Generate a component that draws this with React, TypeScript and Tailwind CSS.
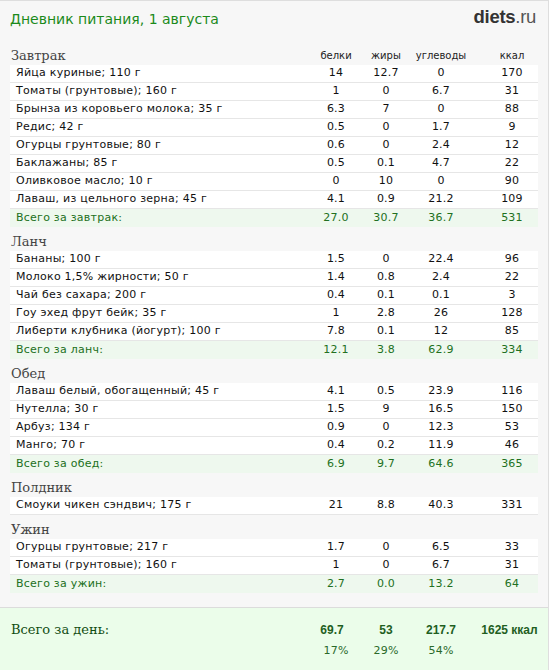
import React from 'react';

type Row = [string, string, string, string, string];

type Meal = {
    title: string;
    items: Row[];
    total?: [string, string, string, string];
};

const meals: Meal[] = [
    {
        title: 'Завтрак',
        items: [
            ['Яйца куриные; 110 г', '14', '12.7', '0', '170'],
            ['Томаты (грунтовые); 160 г', '1', '0', '6.7', '31'],
            ['Брынза из коровьего молока; 35 г', '6.3', '7', '0', '88'],
            ['Редис; 42 г', '0.5', '0', '1.7', '9'],
            ['Огурцы грунтовые; 80 г', '0.6', '0', '2.4', '12'],
            ['Баклажаны; 85 г', '0.5', '0.1', '4.7', '22'],
            ['Оливковое масло; 10 г', '0', '10', '0', '90'],
            ['Лаваш, из цельного зерна; 45 г', '4.1', '0.9', '21.2', '109'],
        ],
        total: ['27.0', '30.7', '36.7', '531'],
    },
    {
        title: 'Ланч',
        items: [
            ['Бананы; 100 г', '1.5', '0', '22.4', '96'],
            ['Молоко 1,5% жирности; 50 г', '1.4', '0.8', '2.4', '22'],
            ['Чай без сахара; 200 г', '0.4', '0.1', '0.1', '3'],
            ['Гоу эхед фрут бейк; 35 г', '1', '2.8', '26', '128'],
            ['Либерти клубника (йогурт); 100 г', '7.8', '0.1', '12', '85'],
        ],
        total: ['12.1', '3.8', '62.9', '334'],
    },
    {
        title: 'Обед',
        items: [
            ['Лаваш белый, обогащенный; 45 г', '4.1', '0.5', '23.9', '116'],
            ['Нутелла; 30 г', '1.5', '9', '16.5', '150'],
            ['Арбуз; 134 г', '0.9', '0', '12.3', '53'],
            ['Манго; 70 г', '0.4', '0.2', '11.9', '46'],
        ],
        total: ['6.9', '9.7', '64.6', '365'],
    },
    {
        title: 'Полдник',
        items: [['Смоуки чикен сэндвич; 175 г', '21', '8.8', '40.3', '331']],
    },
    {
        title: 'Ужин',
        items: [
            ['Огурцы грунтовые; 217 г', '1.7', '0', '6.5', '33'],
            ['Томаты (грунтовые); 160 г', '1', '0', '6.7', '31'],
        ],
        total: ['2.7', '0.0', '13.2', '64'],
    },
];

const grid = 'grid grid-cols-[1fr_50px_50px_60px_67px] items-center';
const itemFont = "font-['DejaVu_Sans',sans-serif] text-[11px] tracking-[0.25px]";
const headFont = "font-['DejaVu_Sans',sans-serif] text-[10px] leading-[18px] text-center text-[#222]";
const serif = "font-['DejaVu_Serif',serif]";

const App = () => {
    return (
        <div className="w-[549px] h-[670px] bg-[#f7f7f7] border-r border-t border-[#dedede] overflow-hidden">
            {/* шапка */}
            <div className="flex justify-between items-center h-[36px] pl-[10px] pr-[12px]">
                <h1 className="font-['DejaVu_Sans',sans-serif] text-[14px] text-[#1b8a1b] font-normal">Дневник питания, 1 августа</h1>
                <div className="font-['Liberation_Sans',sans-serif] text-[18.5px] leading-none text-[#333] tracking-[-0.3px] -mt-[4px]">
                    <span className="font-bold">diets</span><span className="text-[#555]">.ru</span>
                </div>
            </div>

            <div className="px-[10px]">
                {meals.map((meal, i) => (
                    <div key={meal.title}>
                        <div className={`${grid} ${i === 0 ? 'h-[28px]' : 'h-[24px]'} items-end`}>
                            <div className={`${serif} text-[13px] leading-[18px] text-[#444] pl-[1px]`}>{meal.title}</div>
                            {i === 0 && (
                                <>
                                    <div className={headFont}>белки</div>
                                    <div className={headFont}>жиры</div>
                                    <div className={headFont}>углеводы</div>
                                    <div className={`${headFont} pl-[15px]`}>ккал</div>
                                </>
                            )}
                        </div>
                        {meal.items.map((r, k) => (
                            <div key={k} className={`${grid} ${itemFont} h-[18px] bg-white border-b border-[#e6e6e6] text-[#111]`}>
                                <div className="pl-[6px] whitespace-nowrap">{r[0]}</div>
                                <div className="text-center">{r[1]}</div>
                                <div className="text-center">{r[2]}</div>
                                <div className="text-center">{r[3]}</div>
                                <div className="text-center pl-[15px]">{r[4]}</div>
                            </div>
                        ))}
                        {meal.total && (
                            <div className={`${grid} ${itemFont} h-[18px] bg-[#eef8ee] text-[#217021]`}>
                                <div className="pl-[6px]">Всего за {meal.title.toLowerCase()}:</div>
                                <div className="text-center">{meal.total[0]}</div>
                                <div className="text-center">{meal.total[1]}</div>
                                <div className="text-center">{meal.total[2]}</div>
                                <div className="text-center pl-[15px]">{meal.total[3]}</div>
                            </div>
                        )}
                    </div>
                ))}
            </div>

            {/* итог за день */}
            <div className="mt-[14px] bg-[#ebfdea] border-t border-[#dcdcdc] h-[70px] px-[10px] pt-[12px]">
                <div className={grid}>
                    <div className={`${serif} text-[13px] leading-[20px] text-[#124d12] pl-[1px]`}>Всего за день:</div>
                    <div className="font-['Liberation_Sans',sans-serif] font-bold text-[12px] text-center text-[#1f5f1f] pr-[8px]">69.7</div>
                    <div className="font-['Liberation_Sans',sans-serif] font-bold text-[12px] text-center text-[#1f5f1f]">53</div>
                    <div className="font-['Liberation_Sans',sans-serif] font-bold text-[12px] text-center text-[#1f5f1f]">217.7</div>
                    <div className="font-['Liberation_Sans',sans-serif] font-bold text-[12px] text-center text-[#1f5f1f] pl-[10px] whitespace-nowrap">1625 ккал</div>
                </div>
                <div className={`${grid} mt-[2px]`}>
                    <div />
                    <div className={`${itemFont} text-center text-[#2a6a2a] leading-[18px]`}>17%</div>
                    <div className={`${itemFont} text-center text-[#2a6a2a] leading-[18px]`}>29%</div>
                    <div className={`${itemFont} text-center text-[#2a6a2a] leading-[18px]`}>54%</div>
                    <div />
                </div>
            </div>
        </div>
    );
};

export default App;
